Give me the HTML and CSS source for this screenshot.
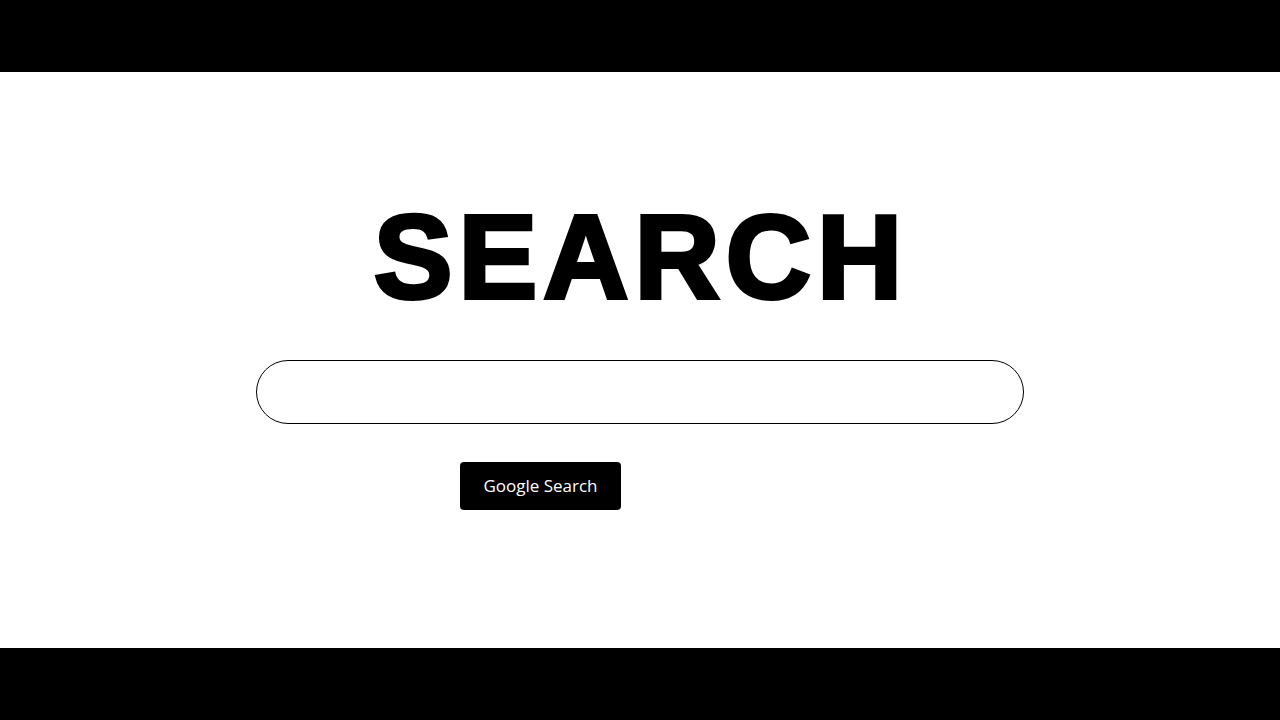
FILE: index.html
```html
<!DOCTYPE html>
<html>
<head>
<meta charset="utf-8">
<title>Search</title>
<link rel="stylesheet" href="styles.css">
</head>
<body>
<div class="bar"></div>
<main class="main">
  <h1 class="title">SEARCH</h1>
  <div class="form">
    <input class="box" type="text" aria-label="Search">
    <button class="btn" type="button">Google Search</button>
  </div>
</main>
<div class="bar"></div>
</body>
</html>
```
FILE: styles.css
```css
html, body {
  margin: 0;
  padding: 0;
  height: 100%;
  background: #fff;
}
body {
  display: flex;
  flex-direction: column;
  width: 1280px;
  height: 720px;
  overflow: hidden;
}
.bar {
  height: 72px;
  background: #000;
  flex: none;
}
.main {
  flex: 1;
  display: flex;
  flex-direction: column;
  align-items: center;
  padding-top: 126px;
  box-sizing: border-box;
}
.title {
  margin: 0;
  font-family: "Liberation Sans", Arial, sans-serif;
  font-weight: 700;
  font-size: 118px;
  line-height: 1;
  color: #000;
  -webkit-text-stroke: 4px #000;
  letter-spacing: 6px;
  margin-right: -2px;
}
.form {
  width: 768px;
  display: flex;
  flex-direction: column;
  margin-top: 44px;
}
.box {
  width: 768px;
  height: 64px;
  box-sizing: border-box;
  border: 1.5px solid #000;
  border-radius: 32px;
  outline: none;
  background: #fff;
  padding: 0 28px;
  font-size: 18px;
}
.btn {
  align-self: flex-start;
  margin-top: 38px;
  margin-left: 204px;
  width: 161px;
  height: 48px;
  background: #000;
  color: #fff;
  border: none;
  border-radius: 4px;
  font-family: "Open Sans", sans-serif;
  font-size: 17px;
  line-height: 47px;
  padding: 0 0 1px;
  cursor: pointer;
}
```
